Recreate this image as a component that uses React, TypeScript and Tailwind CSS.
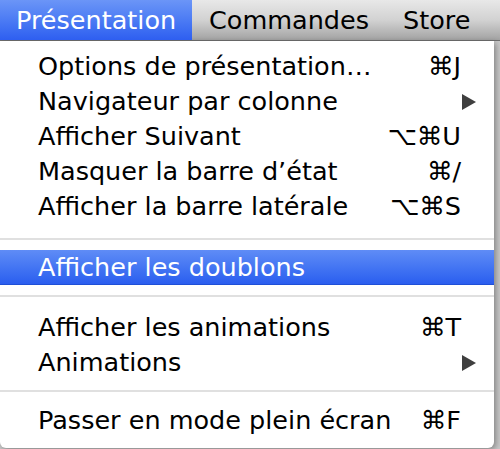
import React from "react";

type Item =
  | { kind: "item"; label: string; shortcut?: string; submenu?: boolean; active?: boolean }
  | { kind: "sep"; h: string; pt: string };

const items: Item[] = [
  { kind: "item", label: "Options de présentation…", shortcut: "⌘J" },
  { kind: "item", label: "Navigateur par colonne", submenu: true },
  { kind: "item", label: "Afficher Suivant", shortcut: "⌥⌘U" },
  { kind: "item", label: "Masquer la barre d’état", shortcut: "⌘/" },
  { kind: "item", label: "Afficher la barre latérale", shortcut: "⌥⌘S" },
  { kind: "sep", h: "h-[26px]", pt: "pt-[14px]" },
  { kind: "item", label: "Afficher les doublons", active: true },
  { kind: "sep", h: "h-[25px]", pt: "pt-[10px]" },
  { kind: "item", label: "Afficher les animations", shortcut: "⌘T" },
  { kind: "item", label: "Animations", submenu: true },
  { kind: "sep", h: "h-[23px]", pt: "pt-[10px]" },
  { kind: "item", label: "Passer en mode plein écran", shortcut: "⌘F" },
];

function Triangle() {
  return (
    <svg width="16" height="18" viewBox="0 0 16 18" className="block">
      <path d="M1 1 L15 9 L1 17 Z" fill="#3f3f3f" />
    </svg>
  );
}

export default function App() {
  return (
    <div
      className="w-[500px] h-[449px] overflow-hidden bg-[#c9c9c9] relative"
      style={{ fontFamily: '"DejaVu Sans", "Liberation Sans", sans-serif' }}
    >
      {/* menu bar */}
      <div className="h-[41px] flex items-stretch bg-gradient-to-b from-[#e8e8e8] via-[#d2d2d2] to-[#a3a3a3] border-b border-[#6f6f6f] text-[25.5px] text-black">
        <div className="w-[192px] pl-[16px] flex items-center text-white bg-gradient-to-b from-[#6b95f7] to-[#2e5ef0]">
          Présentation
        </div>
        <div className="pl-[17px] flex items-center">Commandes</div>
        <div className="pl-[34px] flex items-center">Store</div>
      </div>

      {/* dropdown */}
      <div className="w-[494px] h-[407px] bg-white rounded-b-[6px] shadow-[2px_2px_6px_rgba(0,0,0,0.35)] pt-[8px] text-[25.5px] text-black">
        {items.map((it, i) =>
          it.kind === "sep" ? (
            <div key={i} className={`${it.h} ${it.pt}`}>
              <div className="h-[2px] bg-[#e0e0e0]" />
            </div>
          ) : (
            <div
              key={i}
              className={`h-[35px] flex items-center pl-[38px] pr-[17px] ${
                it.active
                  ? "bg-gradient-to-b from-[#5f8cf6] to-[#2a5def] text-white border-b border-[#1f4fd6]"
                  : ""
              }`}
            >
              <span className="flex-1 whitespace-nowrap">{it.label}</span>
              {it.shortcut && <span className="pr-[16px] whitespace-nowrap">{it.shortcut}</span>}
              {it.submenu && <Triangle />}
            </div>
          )
        )}
      </div>
    </div>
  );
}
